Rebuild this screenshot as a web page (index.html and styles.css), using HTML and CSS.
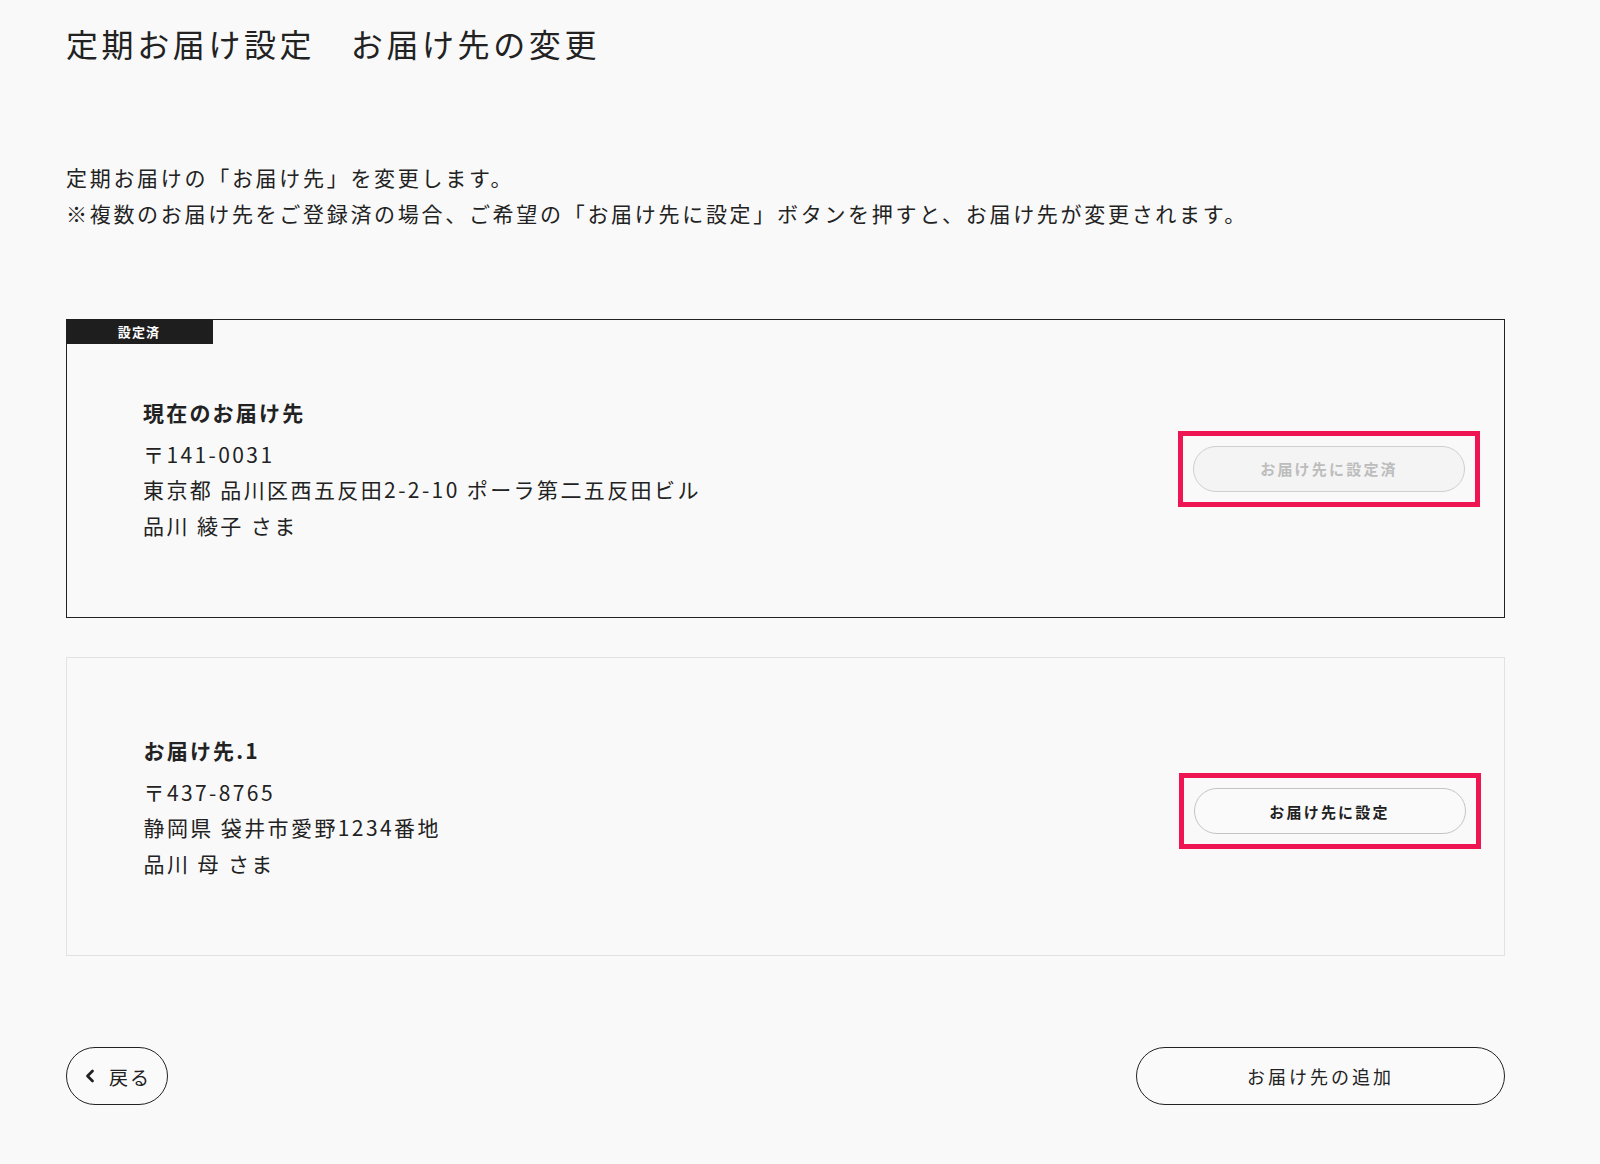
FILE: index.html
```html
<!DOCTYPE html>
<html lang="ja">
<head>
<meta charset="utf-8">
<title>定期お届け設定 お届け先の変更</title>
<link rel="stylesheet" href="styles.css">
</head>
<body>
<main class="page">
  <h1 class="title">定期お届け設定　お届け先の変更</h1>
  <p class="lead">定期お届けの「お届け先」を変更します。<br>※複数のお届け先をご登録済の場合、ご希望の「お届け先に設定」ボタンを押すと、お届け先が変更されます。</p>

  <section class="card card-current">
    <span class="badge">設定済</span>
    <div class="addr">
      <h2 class="addr-title">現在のお届け先</h2>
      <p class="addr-line">〒141-0031</p>
      <p class="addr-line">東京都 品川区西五反田2-2-10 ポーラ第二五反田ビル</p>
      <p class="addr-line">品川 綾子 さま</p>
    </div>
    <div class="highlight">
      <button class="set-btn is-done" type="button">お届け先に設定済</button>
    </div>
  </section>

  <section class="card card-other">
    <div class="addr">
      <h2 class="addr-title">お届け先.1</h2>
      <p class="addr-line">〒437-8765</p>
      <p class="addr-line">静岡県 袋井市愛野1234番地</p>
      <p class="addr-line">品川 母 さま</p>
    </div>
    <div class="highlight highlight-low">
      <button class="set-btn" type="button">お届け先に設定</button>
    </div>
  </section>

  <div class="actions">
    <button class="back-btn" type="button">
      <svg class="chev" width="10" height="14" viewBox="0 0 10 14"><polyline points="7.5,2 2.5,7 7.5,12" fill="none" stroke="#222" stroke-width="2.8" stroke-linecap="round" stroke-linejoin="round"/></svg>
      <span>戻る</span>
    </button>
    <button class="add-btn" type="button">お届け先の追加</button>
  </div>
</main>
</body>
</html>
```
FILE: styles.css
```css
* { box-sizing: border-box; }
html, body { margin: 0; padding: 0; }
body {
  background: #f9f9f9;
  color: #222;
  font-family: "Noto Sans CJK JP", "Noto Sans", sans-serif;
}
.page {
  width: 1439px;
  margin-left: 66px;
  padding-top: 19px;
}
.title {
  margin: 0;
  font-size: 32px;
  font-weight: 400;
  line-height: 48px;
  letter-spacing: 3.6px;
}
.lead {
  margin: 92px 0 0;
  font-size: 21px;
  line-height: 36px;
  letter-spacing: 2.7px;
}
.card {
  position: relative;
  height: 299px;
  display: flex;
  align-items: center;
  justify-content: space-between;
  padding: 0 24px 0 76px;
}
.card-current {
  margin-top: 88px;
  border: 1.5px solid #222;
}
.card-other {
  margin-top: 39px;
  border: 1px solid #e2e2e2;
  padding-left: 76.5px;
  padding-right: 23.5px;
}
.badge {
  position: absolute;
  left: -1.5px;
  top: -1.5px;
  width: 147px;
  height: 25px;
  background: #1e1e1e;
  color: #fff;
  font-size: 13px;
  font-weight: 700;
  line-height: 25px;
  letter-spacing: 1.2px;
  text-align: center;
}
.addr-title {
  margin: 0 0 7px;
  font-size: 21px;
  font-weight: 700;
  line-height: 36px;
  letter-spacing: 2.2px;
}
.addr-line {
  margin: 0;
  font-size: 21px;
  line-height: 35.5px;
  letter-spacing: 2.4px;
}
.highlight {
  border: 5px solid #ef1452;
  padding: 10px;
}
.highlight-low {
  margin-top: 9px;
}
.set-btn {
  display: block;
  width: 272px;
  height: 46px;
  border-radius: 23px;
  border: 1.5px solid #c4c4c4;
  background: #fafafa;
  color: #222;
  font-family: inherit;
  font-size: 15px;
  font-weight: 700;
  letter-spacing: 2.2px;
  cursor: pointer;
}
.set-btn.is-done {
  background: #f4f4f4;
  color: #bdbdbd;
  border-color: #cfcfcf;
}
.actions {
  margin-top: 91px;
  display: flex;
  justify-content: space-between;
}
.back-btn, .add-btn {
  height: 58px;
  border: 1.5px solid #222;
  border-radius: 29px;
  background: #fafafa;
  color: #222;
  font-family: inherit;
  font-size: 19px;
  letter-spacing: 2px;
  cursor: pointer;
}
.back-btn {
  width: 102px;
  display: flex;
  align-items: center;
  gap: 14px;
  padding: 0 0 0 18px;
}
.chev { flex: none; }
.add-btn {
  width: 369px;
  font-size: 18px;
  letter-spacing: 3px;
}
```
